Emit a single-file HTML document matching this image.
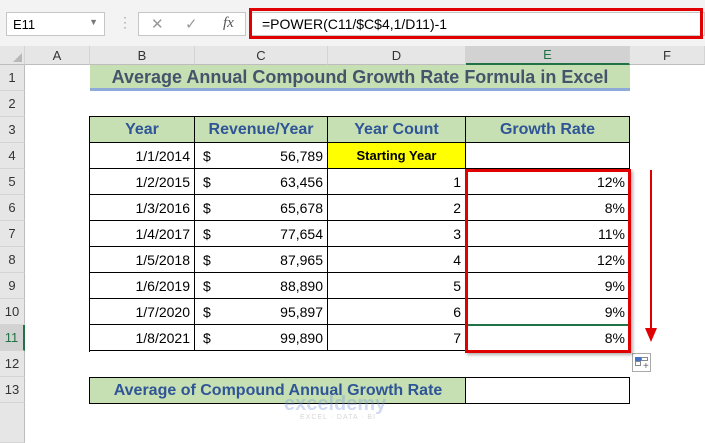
<!DOCTYPE html>
<html><head><style>
*{margin:0;padding:0;box-sizing:border-box}
body{width:705px;height:443px;overflow:hidden;background:#fff;font-family:"Liberation Sans",Calibri,sans-serif;position:relative}
.a{position:absolute}
.rh{position:absolute;left:0;width:25px;background:#e6e6e6;border-bottom:1px solid #d4d4d4;border-right:1px solid #bdbdbd;font-size:13px;color:#333;display:flex;align-items:center;justify-content:center}
.ch{position:absolute;top:46px;height:19px;background:#e6e6e6;border-right:1px solid #d4d4d4;border-bottom:1px solid #bdbdbd;font-size:13px;color:#333;display:flex;align-items:center;justify-content:center}
.c{position:absolute;height:26px;border-right:1px solid #000;border-bottom:1px solid #000;font-size:14px;display:flex;align-items:center;padding:0 4px;color:#000}
.h{background:#c6e0b4;color:#2f5597;font-weight:bold;font-size:16px;justify-content:center}
.r{justify-content:flex-end}
.ln{position:absolute;background:#000;z-index:5}
</style></head><body>
<div class="a" style="left:0;top:0;width:705px;height:46px;background:#f3f3f3"></div>
<div class="a" style="left:6px;top:12px;width:99px;height:24px;background:#fff;border:1px solid #c6c6c6;font-size:13px;padding:4px 6px">E11<span style="position:absolute;right:6px;top:4px;font-size:9px;color:#777">▼</span></div>
<div class="a" style="left:118px;top:14px;color:#aaa;font-size:14px">⋮</div>
<div class="a" style="left:138px;top:12px;width:108px;height:24px;background:#fff;border:1px solid #c6c6c6;color:#999;font-size:15px"><span style="position:absolute;left:12px;top:2px">✕</span><span style="position:absolute;left:46px;top:2px">✓</span><span style="position:absolute;left:84px;top:2px;font-family:'Liberation Serif',serif;font-style:italic;color:#555">fx</span></div>
<div class="a" style="left:250px;top:12px;width:455px;height:24px;background:#fff;border:1px solid #c6c6c6"></div>
<div class="a" style="left:249px;top:8px;width:454px;height:31px;border:3px solid #e00000;font-size:14px;padding:5px 10px;color:#000">=POWER(C11/$C$4,1/D11)-1</div>
<div class="a" style="left:0;top:46px;width:705px;height:19px;background:#e6e6e6"></div>
<div class="ch" style="left:0;width:25px"><span style="position:absolute;right:2px;bottom:2px;width:0;height:0;border-left:9px solid transparent;border-bottom:9px solid #b8b8b8"></span></div>
<div class="ch" style="left:25px;width:65px">A</div>
<div class="ch" style="left:90px;width:105px">B</div>
<div class="ch" style="left:195px;width:133px">C</div>
<div class="ch" style="left:328px;width:138px">D</div>
<div class="ch" style="left:466px;width:164px;background:#d2d2d2;color:#217346;border-bottom:2px solid #217346">E</div>
<div class="ch" style="left:630px;width:75px">F</div>
<div class="rh" style="top:65px;height:26px">1</div>
<div class="rh" style="top:91px;height:26px">2</div>
<div class="rh" style="top:117px;height:26px">3</div>
<div class="rh" style="top:143px;height:26px">4</div>
<div class="rh" style="top:169px;height:26px">5</div>
<div class="rh" style="top:195px;height:26px">6</div>
<div class="rh" style="top:221px;height:26px">7</div>
<div class="rh" style="top:247px;height:26px">8</div>
<div class="rh" style="top:273px;height:26px">9</div>
<div class="rh" style="top:299px;height:26px">10</div>
<div class="rh" style="top:325px;height:26px;background:#d2d2d2;color:#217346;border-right:2px solid #217346">11</div>
<div class="rh" style="top:351px;height:26px">12</div>
<div class="rh" style="top:377px;height:26px">13</div>
<div class="rh" style="top:403px;height:40px"></div>
<div class="a" style="left:90px;top:65px;width:540px;height:26px;background:#c6e0b4;border-bottom:3px solid #8eaadb;color:#44546a;font-weight:bold;font-size:18px;text-align:center;line-height:24px">Average Annual Compound Growth Rate Formula in Excel</div>
<div class="c h" style="left:90px;top:117px;width:105px">Year</div>
<div class="c h" style="left:195px;top:117px;width:133px">Revenue/Year</div>
<div class="c h" style="left:328px;top:117px;width:138px">Year Count</div>
<div class="c h" style="left:466px;top:117px;width:164px">Growth Rate</div>
<div class="c r" style="left:90px;top:143px;width:105px">1/1/2014</div><div class="c r" style="left:195px;top:143px;width:133px"><span style="position:absolute;left:8px">$</span>56,789</div><div class="c" style="left:328px;top:143px;width:138px;background:#ffff00;font-weight:bold;font-size:13px;justify-content:center">Starting Year</div><div class="c" style="left:466px;top:143px;width:164px"></div>
<div class="c r" style="left:90px;top:169px;width:105px">1/2/2015</div><div class="c r" style="left:195px;top:169px;width:133px"><span style="position:absolute;left:8px">$</span>63,456</div><div class="c r" style="left:328px;top:169px;width:138px">1</div><div class="c r" style="left:466px;top:169px;width:164px">12%</div>
<div class="c r" style="left:90px;top:195px;width:105px">1/3/2016</div><div class="c r" style="left:195px;top:195px;width:133px"><span style="position:absolute;left:8px">$</span>65,678</div><div class="c r" style="left:328px;top:195px;width:138px">2</div><div class="c r" style="left:466px;top:195px;width:164px">8%</div>
<div class="c r" style="left:90px;top:221px;width:105px">1/4/2017</div><div class="c r" style="left:195px;top:221px;width:133px"><span style="position:absolute;left:8px">$</span>77,654</div><div class="c r" style="left:328px;top:221px;width:138px">3</div><div class="c r" style="left:466px;top:221px;width:164px">11%</div>
<div class="c r" style="left:90px;top:247px;width:105px">1/5/2018</div><div class="c r" style="left:195px;top:247px;width:133px"><span style="position:absolute;left:8px">$</span>87,965</div><div class="c r" style="left:328px;top:247px;width:138px">4</div><div class="c r" style="left:466px;top:247px;width:164px">12%</div>
<div class="c r" style="left:90px;top:273px;width:105px">1/6/2019</div><div class="c r" style="left:195px;top:273px;width:133px"><span style="position:absolute;left:8px">$</span>88,890</div><div class="c r" style="left:328px;top:273px;width:138px">5</div><div class="c r" style="left:466px;top:273px;width:164px">9%</div>
<div class="c r" style="left:90px;top:299px;width:105px">1/7/2020</div><div class="c r" style="left:195px;top:299px;width:133px"><span style="position:absolute;left:8px">$</span>95,897</div><div class="c r" style="left:328px;top:299px;width:138px">6</div><div class="c r" style="left:466px;top:299px;width:164px">9%</div>
<div class="c r" style="left:90px;top:325px;width:105px">1/8/2021</div><div class="c r" style="left:195px;top:325px;width:133px"><span style="position:absolute;left:8px">$</span>99,890</div><div class="c r" style="left:328px;top:325px;width:138px">7</div><div class="c r" style="left:466px;top:325px;width:164px">8%</div>
<div class="ln" style="left:89px;top:116px;width:1px;height:236px"></div>
<div class="ln" style="left:89px;top:116px;width:541px;height:1px"></div>
<div class="a" style="left:466px;top:324px;width:164px;height:28px;border:2px solid #217346;z-index:6"></div>
<div class="a" style="left:465px;top:169px;width:166px;height:184px;border:3px solid #e00000;box-shadow:2px 2px 3px rgba(0,0,0,.3);z-index:7"></div>
<div class="a" style="left:90px;top:378px;width:376px;height:25px;background:#c6e0b4;color:#2f5597;font-weight:bold;font-size:16px;text-align:center;line-height:25px">Average of Compound Annual Growth Rate</div>
<div class="a" style="left:89px;top:377px;width:541px;height:27px;border:1px solid #000;z-index:5"></div>
<div class="ln" style="left:465px;top:377px;width:1px;height:27px"></div>
<div class="a" style="left:650px;top:170px;width:2px;height:160px;background:#e00000"></div>
<div class="a" style="left:645px;top:328px;width:0;height:0;border-left:6px solid transparent;border-right:6px solid transparent;border-top:14px solid #e00000"></div>
<div class="a" style="left:632px;top:353px;width:19px;height:19px;border:1px solid #aaa;background:#fff"><div class="a" style="left:2px;top:3px;width:6px;height:4px;background:#4472c4"></div><div class="a" style="left:8px;top:3px;width:7px;height:4px;border:1px solid #888"></div><div class="a" style="left:2px;top:7px;width:6px;height:5px;border:1px solid #888"></div><div class="a" style="left:10px;top:7px;font-size:10px;color:#666">+</div></div>
<div class="a" style="left:284px;top:393px;color:rgba(120,150,220,.35);font-weight:bold;font-size:20px;z-index:8">exceldemy</div>
<div class="a" style="left:300px;top:414px;color:rgba(150,150,150,.4);font-size:7px;letter-spacing:1px">EXCEL · DATA · BI</div>
</body></html>
